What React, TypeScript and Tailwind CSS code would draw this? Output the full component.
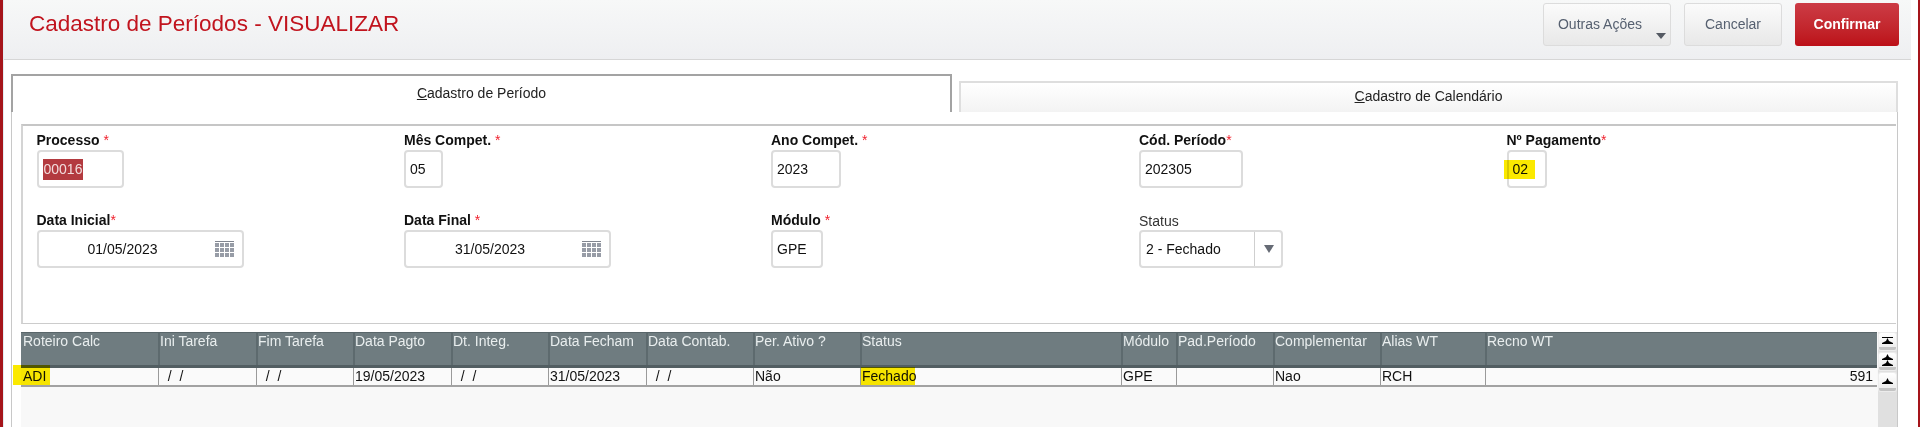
import React from "react";

const fontStack = "font-['Liberation_Sans',Arial,sans-serif]";

const columns = [
  { title: "Roteiro Calc", value: "ADI", width: "w-[137px]" },
  { title: "Ini Tarefa", value: "  /  /", width: "w-[98px]" },
  { title: "Fim Tarefa", value: "  /  /", width: "w-[97px]" },
  { title: "Data Pagto", value: "19/05/2023", width: "w-[98px]" },
  { title: "Dt. Integ.", value: "  /  /", width: "w-[97px]" },
  { title: "Data Fecham", value: "31/05/2023", width: "w-[98px]" },
  { title: "Data Contab.", value: "  /  /", width: "w-[107px]" },
  { title: "Per. Ativo ?", value: "Não", width: "w-[107px]" },
  { title: "Status", value: "Fechado", width: "w-[261px]" },
  { title: "Módulo", value: "GPE", width: "w-[55px]" },
  { title: "Pad.Período", value: "", width: "w-[97px]" },
  { title: "Complementar", value: "Nao", width: "w-[107px]" },
  { title: "Alias WT", value: "RCH", width: "w-[105px]" },
  { title: "Recno WT", value: "591", width: "w-[392px]", right: true },
];

function Required() {
  return <span className="font-normal text-[#f01f2b]">*</span>;
}

function Label({ text, spaced = true }: { text: string; spaced?: boolean }) {
  return (
    <div className="h-[17px] text-[14px] leading-[17px] font-bold text-[#111]">
      {text}
      {spaced ? " " : ""}
      <Required />
    </div>
  );
}

function TextBox({ value, width, children }: { value?: string; width: string; children?: React.ReactNode }) {
  return (
    <div className={`${width} mt-[1px] flex h-[38px] items-center rounded-[4px] border-2 border-[#dcdcdc] bg-white pl-[4px] text-[14px] text-[#111]`}>
      {value}
      {children}
    </div>
  );
}

function CalendarIcon() {
  const squares = [];
  for (let row = 0; row < 3; row++) {
    for (let col = 0; col < 4; col++) {
      squares.push(<rect key={`${row}-${col}`} x={col * 5} y={2 + row * 5} width="4" height="4" />);
    }
  }
  return (
    <svg width="19" height="17" viewBox="0 0 19 17" fill="#979ca6" className="shrink-0">
      <rect x="0" y="0" width="19" height="1" fill="#80858f" />
      {squares}
    </svg>
  );
}

function DateBox({ value, width }: { value: string; width: string }) {
  return (
    <div className={`${width} mt-[1px] flex h-[38px] items-center rounded-[4px] border-2 border-[#dcdcdc] bg-white text-[14px] text-[#111]`}>
      <div className="flex-1 text-center">{value}</div>
      <div className="flex w-[35px] justify-center">
        <CalendarIcon />
      </div>
    </div>
  );
}

function ScrollButton({ children, height }: { children: React.ReactNode; height: string }) {
  return (
    <div className={`${height} flex flex-col items-center justify-center rounded-[2px] border-b-[3px] border-[#c4c4c4] bg-gradient-to-b from-white to-[#eeeeee] shadow-[0_0_0_1px_#ececec]`}>
      {children}
    </div>
  );
}

function Peak() {
  return (
    <svg width="11" height="6" viewBox="0 0 11 6" fill="#000">
      <path d="M5.5 0 L7 3 L11 5 L11 6 L0 6 L0 5 L4 3 Z" />
    </svg>
  );
}

export default function App() {
  return (
    <div className={`${fontStack} flex h-[427px] w-[1920px] overflow-hidden bg-white`}>
      <div className="w-[3px] shrink-0 bg-[#a5141a]" />

      <main className="w-[1908px] shrink-0 border-l border-[#e3ecf1]">
        {/* Header */}
        <header className="flex h-[60px] items-start justify-between border-b border-[#d6d6d6] bg-gradient-to-b from-[#f7f8f8] to-[#eeeff1] pl-[25px] pr-[12px]">
          <h1 className="mt-[10px] text-[22.5px] leading-[28px] font-normal text-[#c1141e]">Cadastro de Períodos - VISUALIZAR</h1>
          <div className="mt-[3px] flex gap-[13px]">
            <button className="relative h-[43px] w-[128px] rounded-[3px] border border-[#dcdcdc] bg-gradient-to-b from-[#fbfbfb] to-[#e8e8e8] pr-[14px] text-[14px] text-[#566070]">
              Outras Ações
              <svg width="10" height="6" viewBox="0 0 10 6" className="absolute right-[4px] bottom-[6px]" fill="#555a63">
                <path d="M0 0 H10 L5 6 Z" />
              </svg>
            </button>
            <button className="h-[43px] w-[98px] rounded-[3px] border border-[#dcdcdc] bg-gradient-to-b from-[#fbfbfb] to-[#e8e8e8] text-[14px] text-[#566070]">Cancelar</button>
            <button className="h-[43px] w-[104px] rounded-[3px] bg-gradient-to-b from-[#cc3b45] to-[#bc0f17] text-[14px] font-bold text-white">Confirmar</button>
          </div>
        </header>

        {/* Tabs */}
        <div className="mt-[14px] flex h-[38px] items-end pl-[7px]">
          <div className="flex h-[38px] w-[941px] justify-center border-x-2 border-t-2 border-[#a3a3a3] bg-white pt-[7px] text-[14px] text-[#222]">
            <span>
              <span className="underline">C</span>adastro de Período
            </span>
          </div>
          <div className="ml-[7px] flex h-[31px] w-[939px] justify-center border-x-2 border-t-2 border-[#dedede] bg-gradient-to-b from-white to-[#f3f3f3] pt-[3px] text-[14px] text-[#222]">
            <span>
              <span className="underline">C</span>adastro de Calendário
            </span>
          </div>
        </div>

        {/* Panel */}
        <div className="ml-[7px] h-[315px] w-[1887px] border-x border-[#c8c8c8] pl-[9px] pr-[1px] pt-[12px]">
          <section className="relative h-[200px] border-t-2 border-b border-l-2 border-t-[#c6c6c6] border-b-[#cccccc] border-l-[#d4d4d4] pt-[6px]">
            <div className="grid grid-cols-[367.5px_367px_368px_367.5px_auto] pl-[13.5px]">
              <div>
                <Label text="Processo" />
                <TextBox width="w-[87px]">
                  <span className="bg-[#b33a3f] px-[1px] text-[#f2dcdc]">00016</span>
                </TextBox>
              </div>
              <div>
                <Label text="Mês Compet." />
                <TextBox value="05" width="w-[39px]" />
              </div>
              <div>
                <Label text="Ano Compet." />
                <TextBox value="2023" width="w-[70px]" />
              </div>
              <div>
                <Label text="Cód. Período" spaced={false} />
                <TextBox value="202305" width="w-[104px]" />
              </div>
              <div>
                <Label text="Nº Pagamento" spaced={false} />
                <TextBox value="02" width="w-[40px]" />
              </div>
            </div>

            <div className="mt-[24px] grid grid-cols-[367.5px_367px_368px_367.5px_auto] pl-[13.5px]">
              <div>
                <Label text="Data Inicial" spaced={false} />
                <DateBox value="01/05/2023" width="w-[207px]" />
              </div>
              <div>
                <Label text="Data Final" />
                <DateBox value="31/05/2023" width="w-[207px]" />
              </div>
              <div>
                <Label text="Módulo" />
                <TextBox value="GPE" width="w-[52px]" />
              </div>
              <div>
                <div className="h-[17px] text-[14px] leading-[18px] text-[#333]">Status</div>
                <div className="mt-[1px] flex h-[38px] w-[144px] items-center rounded-[4px] border-2 border-[#dcdcdc] bg-white text-[14px] text-[#111]">
                  <div className="w-[113px] pl-[5px]">2 - Fechado</div>
                  <div className="flex h-full w-[27px] items-center justify-center border-l border-[#cfcfcf] pl-[1px]">
                    <svg width="10" height="8" viewBox="0 0 10 8" fill="#666b75">
                      <path d="M0 0 H10 L5 8 Z" />
                    </svg>
                  </div>
                </div>
              </div>
            </div>

            {/* marker on Nº Pagamento */}
            <div className="absolute left-[1481px] top-[34px] h-[19px] w-[31px] bg-[#fbe900] mix-blend-multiply" />
          </section>

          {/* Grid */}
          <div className="mt-[8px] flex h-[95px] w-[1876px] bg-[#f8f8f8]">
            <div className="w-[1856px]">
              <div className="flex h-[36px] border-t border-b-[3px] border-t-[#59666a] border-b-[#525e62] bg-[#6f7c80]">
                {columns.map((col) => (
                  <div key={col.title} className={`${col.width} shrink-0 border-l-2 border-[#5d6a6e] pt-[1px] text-[14px] leading-[14px] text-[#e9eeee] first:border-l-0 first:pl-[2px]`}>
                    {col.title}
                  </div>
                ))}
              </div>
              <div className="flex h-[19px] border-b-2 border-[#a2a2a2] bg-[#fafafa]">
                {columns.map((col) => (
                  <div key={col.title} className={`${col.width} ${col.right ? "pr-[4px] text-right" : ""} relative shrink-0 border-l border-[#9a9a9a] pl-[1px] text-[14px] leading-[17px] whitespace-pre text-[#111] first:border-l-0 first:pl-[2px]`}>
                    {col.value}
                    {col.value === "ADI" && <span className="absolute left-[-8px] top-[-3px] h-[20px] w-[37px] bg-[#fbe900] mix-blend-multiply" />}
                    {col.value === "Fechado" && <span className="absolute left-[0px] top-[-1px] h-[18px] w-[54px] bg-[#fbe900] mix-blend-multiply" />}
                  </div>
                ))}
              </div>
            </div>
            <div className="ml-[1px] flex w-[19px] flex-col gap-[3px] bg-[#e0e0e0] px-[1px] pt-[1px]">
              <ScrollButton height="h-[17px]">
                <div className="h-[1px] w-[11px] bg-black" />
                <Peak />
              </ScrollButton>
              <ScrollButton height="h-[17px]">
                <Peak />
                <Peak />
              </ScrollButton>
              <ScrollButton height="h-[18px]">
                <Peak />
              </ScrollButton>
            </div>
          </div>
        </div>
      </main>

      <div className="ml-[7px] w-[2px] shrink-0 bg-[#a5141a]" />
    </div>
  );
}
